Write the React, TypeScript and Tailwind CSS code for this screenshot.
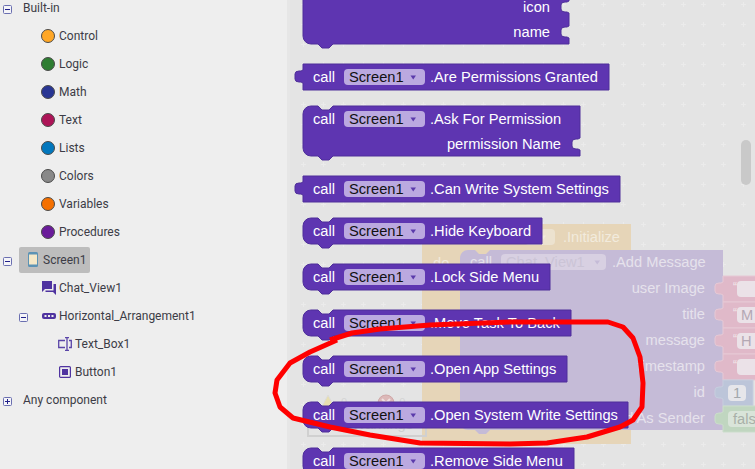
import React from "react";

type Kind = "stmt" | "value" | "topOpen";

function blockPath(kind: Kind, w: number, h: number, sockets: number[] = []) {
  let d = "";
  if (kind === "stmt") d = "M0,8 A8,8 0 0 1 8,0 H15 l4,4 h7 l4,-4 H" + w;
  else if (kind === "topOpen") d = "M0,-20 H" + w;
  else d = "M0,0 H" + w;
  for (const s of sockets) {
    d += ` V${s} l-2,1 h-2 q-4,0 -4,3 v4 q0,3 4,3 h2 l2,1`;
  }
  d += ` V${h}`;
  if (kind === "value") {
    d += ` H0 V19 l-2,-1 h-2 q-4,0 -4,-3 v-5 q0,-3 4,-3 h2 l2,-1 Z`;
  } else {
    d += ` H30 l-4,4 h-7 l-4,-4 H8 A8,8 0 0 1 0,${h - 8} Z`;
  }
  return d;
}

function Arrow({ color = "#5b3bab" }: { color?: string }) {
  return (
    <svg width="7" height="5" viewBox="0 0 7 5"><path d="M0.5,0.5 H6 L3.2,4.5 Z" fill={color} /></svg>
  );
}

function Field() {
  return (
    <span className="flex items-center justify-between h-[16px] w-[81px] rounded-[4px] bg-[#bba9e0] pl-[5px] pr-[8px] text-[#111111]">
      <span>Screen1</span>
      <Arrow />
    </span>
  );
}

function BlockShape({ kind, w, h, sockets }: { kind: Kind; w: number; h: number; sockets?: number[] }) {
  return (
    <svg className="absolute inset-0 overflow-visible" width={w} height={h}>
      <path d={blockPath(kind, w, h, sockets)} fill="#5e35b1" stroke="#4f2f9a" strokeWidth="1" />
    </svg>
  );
}

function CallRow({ name }: { name: string }) {
  return (
    <div className="relative flex items-center h-[26px] pl-[10px] gap-[9px]">
      <span>call</span>
      <Field />
      <span className="-ml-[4px] whitespace-nowrap">{name}</span>
    </div>
  );
}

function Block({ w, kind, name }: { w: number; kind: Kind; name: string }) {
  return (
    <div className={kind === "value" ? "relative h-[26px] shrink-0 mb-[16px]" : "relative h-[26px] shrink-0 mb-[20px]"} style={{ width: w }}>
      <BlockShape kind={kind} w={w} h={26} />
      <CallRow name={name} />
    </div>
  );
}

function Circle({ color }: { color: string }) {
  return <span className="w-[14px] h-[14px] rounded-full border border-[#4a4a4a] shrink-0" style={{ background: color }} />;
}

function Toggle({ plus = false }: { plus?: boolean }) {
  return (
    <svg width="9" height="9" viewBox="0 0 9 9" className="shrink-0 block">
      <rect x="0.5" y="0.5" width="8" height="8" rx="1" fill="#f4f4f8" stroke="#6a6fb0" />
      <path d={plus ? "M2,4.5 H7 M4.5,2 V7" : "M2,4.5 H7"} stroke="#20208a" />
    </svg>
  );
}

const categories: [string, string][] = [
  ["Control", "#ffa726"],
  ["Logic", "#2e7d32"],
  ["Math", "#283593"],
  ["Text", "#ad1457"],
  ["Lists", "#0277bd"],
  ["Colors", "#888888"],
  ["Variables", "#f57000"],
  ["Procedures", "#6a1b9a"],
];

const purple = "#4f33a0";

function PhoneIcon() {
  return (
    <svg width="10" height="15" viewBox="0 0 10 15">
      <rect width="10" height="15" rx="1.5" fill="#5c93b5" />
      <rect x="1" y="2.5" width="8" height="10" fill="#f5e8c8" />
    </svg>
  );
}

function ChatIcon() {
  return (
    <svg width="14" height="14" viewBox="0 0 14 14" fill={purple}>
      <path d="M0,0 H10 V8 H3 L0,11 Z" />
      <path d="M11.5,3 H14 V14 L11,11 H3.5 V9.5 H11.5 Z" />
    </svg>
  );
}

function HArrangeIcon() {
  return (
    <svg width="14" height="6" viewBox="0 0 14 6">
      <rect width="14" height="6" rx="2" fill={purple} />
      <rect x="2.5" y="2" width="2" height="2" fill="#eeeeee" />
      <rect x="6" y="2" width="2" height="2" fill="#eeeeee" />
      <rect x="9.5" y="2" width="2" height="2" fill="#eeeeee" />
    </svg>
  );
}

function TextBoxIcon() {
  return (
    <svg width="14" height="14" viewBox="0 0 14 14" fill="none" stroke="#5a45a8" strokeWidth="1.3">
      <path d="M7,3.5 H0.7 V10.5 H7" />
      <path d="M11,3.5 H13.3 V10.5 H11" />
      <path d="M7,0.7 H11 M9,0.7 V13.3 M7,13.3 H11" />
    </svg>
  );
}

function ButtonIcon() {
  return (
    <svg width="12" height="12" viewBox="0 0 12 12">
      <rect x="0.6" y="0.6" width="10.8" height="10.8" rx="1" fill="#eeeeee" stroke={purple} strokeWidth="1.2" />
      <rect x="3" y="3" width="6" height="6" fill={purple} />
    </svg>
  );
}

function Sidebar() {
  return (
    <aside className="w-[287px] h-[475px] shrink-0 bg-[#eeeeee] text-[12px] text-[#3c3c46] font-['Roboto',sans-serif] -mt-[6px]">
      <div className="relative flex items-center h-[28px] pl-[23px]">
        <span className="absolute left-[3px] top-[11px]"><Toggle /></span>
        Built-in
      </div>
      {categories.map(([n, c]) => (
        <div key={n} className="flex items-center h-[28px] pl-[41px] gap-[4px]">
          <Circle color={c} />
          <span>{n}</span>
        </div>
      ))}
      <div className="relative flex items-center h-[28px] pl-[19px]">
        <span className="absolute left-[3px] top-[11px]"><Toggle /></span>
        <div className="flex items-center h-[26px] w-[71px] -mt-[1px] bg-[#bdbdbd] rounded-[2px] pl-[9px] gap-[5px]">
          <PhoneIcon />
          <span>Screen1</span>
        </div>
      </div>
      <div className="flex items-center h-[28px] pl-[42px] gap-[3px]">
        <ChatIcon />
        <span>Chat_View1</span>
      </div>
      <div className="relative flex items-center h-[28px] pl-[42px] gap-[3px]">
        <span className="absolute left-[19px] top-[11px]"><Toggle /></span>
        <HArrangeIcon />
        <span>Horizontal_Arrangement1</span>
      </div>
      <div className="flex items-center h-[28px] pl-[58px] gap-[3px]">
        <TextBoxIcon />
        <span>Text_Box1</span>
      </div>
      <div className="flex items-center h-[28px] pl-[59px] gap-[4px]">
        <ButtonIcon />
        <span>Button1</span>
      </div>
      <div className="relative flex items-center h-[28px] pl-[23px]">
        <span className="absolute left-[3px] top-[11px]"><Toggle plus /></span>
        Any component
      </div>
    </aside>
  );
}

function GridCrosses() {
  return (
    <svg className="absolute inset-0" width="465" height="469">
      <defs>
        <pattern id="crosses" x="3" y="-6" width="20" height="20" patternUnits="userSpaceOnUse">
          <path d="M8,10.5 H13 M10.5,8 V13" stroke="#ebebeb" strokeWidth="1" />
        </pattern>
      </defs>
      <rect width="465" height="469" fill="url(#crosses)" />
    </svg>
  );
}

function Value({ color, edge, field, quoted = true, w = 40, fieldClass }: { color: string; edge: string; field: string; quoted?: boolean; w?: number; fieldClass: string }) {
  return (
    <div className="relative h-[26px] shrink-0 flex items-center" style={{ width: w }}>
      <svg className="absolute inset-0 overflow-visible" width={w} height="26">
        <path d={blockPath("value", w, 26)} fill={color} stroke={edge} strokeWidth="1" />
      </svg>
      {quoted ? (
        <span className="relative ml-[10px] mt-[-4px] w-[11px] text-[#f2e8ec] text-[12px]">“</span>
      ) : null}
      <span className={fieldClass}>{field}</span>
    </div>
  );
}

const stringField = "relative h-[16px] w-[30px] shrink-0 bg-[#ebe2e8] rounded-[4px] pl-[4px] flex items-center text-[#b4a8b4]";

function FadedBackground() {
  const labels = ["user Image", "title", "message", "timestamp", "id", "Add As Sender"];
  return (
    <div className="absolute inset-0 text-[#e6e2ec]">
      {/* orange event block */}
      <div className="absolute left-[132px] top-[224px] w-[209px] h-[220px] flex flex-col bg-[#e6d5b8] text-[#f2ebdd]">
        <div className="flex items-center justify-end h-[26px] pr-[11px] gap-[8px]">
          <span className="flex items-center justify-end w-[30px] h-[16px] rounded-[4px] bg-[#ece2cf] pr-[8px]"><Arrow color="#f2ebdd" /></span>
          <span>.Initialize</span>
        </div>
        <div className="flex items-center h-[26px] pl-[11px]">do</div>
      </div>
      {/* purple add message */}
      <div className="absolute left-[170px] top-[250px] w-[263px] h-[180px]">
        <svg className="absolute inset-0 overflow-visible" width="263" height="180">
          <path d={blockPath("stmt", 263, 180)} fill="#c5bbd7" />
        </svg>
        <div className="relative flex flex-col items-end pr-[18px]">
          <div className="flex items-center self-start h-[26px] -mt-[1px] pl-[10px] gap-[9px] whitespace-nowrap">
            <span>call</span>
            <span className="flex items-center justify-between w-[105px] h-[16px] rounded-[4px] bg-[#d8d0e2] px-[5px] text-[#cbc4d6]">
              Chat_View1
              <Arrow color="#c5bbd7" />
            </span>
            <span className="-ml-[3px]">.Add Message</span>
          </div>
          {labels.map((l) => (
            <div key={l} className="flex items-center h-[26px] whitespace-nowrap">{l}</div>
          ))}
        </div>
        <div className="absolute left-[263px] top-[26px] flex flex-col">
          <Value color="#e0b9c9" edge="#e6c9d5" field="" fieldClass={stringField} />
          <Value color="#e0b9c9" edge="#e6c9d5" field="M" fieldClass={stringField} />
          <Value color="#e0b9c9" edge="#e6c9d5" field="H" fieldClass={stringField} />
          <Value color="#e0b9c9" edge="#e6c9d5" field="" fieldClass={stringField} />
          <Value color="#bcc5d9" edge="#c6cede" field="1" quoted={false} w={30} fieldClass="relative ml-[5px] h-[16px] w-[18px] shrink-0 bg-[#e6e6ea] rounded-[4px] pl-[5px] flex items-center text-[#a3a8ad]" />
          <Value color="#c0d6c0" edge="#cbddcb" field="false" quoted={false} w={40} fieldClass="relative ml-[5px] h-[16px] w-[40px] shrink-0 bg-[#d9e4d9] rounded-[4px] pl-[5px] flex items-center text-[#a8b0a8]" />
        </div>
      </div>
      {/* warnings */}
      <div className="absolute left-[17px] top-[390px] w-[120px] flex flex-col text-[#cfcfcf]">
        <div className="flex items-center h-[25px] pl-[12px] text-[11px] text-[#d4d4d4]">
          <svg width="18" height="18" viewBox="0 0 18 18">
            <path d="M9,1 L17.5,17 H0.5 Z" fill="#e8dfb0" stroke="#dcdcdc" />
          </svg>
          <span className="ml-[4px]">0</span>
          <svg className="ml-[30px]" width="18" height="18" viewBox="0 0 18 18">
            <circle cx="9" cy="9" r="8" fill="#dcb8b8" stroke="#d0a8a8" />
            <path d="M5,5 L13,13 M13,5 L5,13" stroke="#efe0e0" strokeWidth="2" />
          </svg>
          <span className="ml-[4px]">0</span>
        </div>
        <div className="flex items-end justify-center h-[22px] border-2 border-[#d0d0d0] pr-[10px] whitespace-nowrap">Show Warnings</div>
      </div>
    </div>
  );
}

export default function App() {
  return (
    <div className="relative flex w-[755px] h-[469px] overflow-hidden bg-[#e4e4e4]">
      <Sidebar />
      <div className="w-[3px] h-full shrink-0 bg-[#e6e6e6]" />
      <main className="relative flex-1 h-full bg-[#e4e4e4] text-[14.67px] font-['Liberation_Sans',Arial,sans-serif]">
        <GridCrosses />
        <FadedBackground />
        <div className="absolute left-[451px] top-[140px] w-[10px] h-[45px] rounded-[5px] bg-[#c9c9c9]" />
        {/* flyout of blocks */}
        <div className="absolute left-[13px] top-0 flex flex-col items-start text-white">
          <div className="relative w-[266px] h-[44px] shrink-0 mb-[20px]">
            <BlockShape kind="topOpen" w={266} h={44} sockets={[1, 26]} />
            <div className="relative flex flex-col items-end pr-[19px] -mt-[6px]">
              <span className="h-[25px] flex items-center">icon</span>
              <span className="h-[25px] flex items-center">name</span>
            </div>
          </div>
          <Block w={306} kind="value" name=".Are Permissions Granted" />
          <div className="relative w-[277px] h-[50px] shrink-0 mb-[20px]">
            <BlockShape kind="stmt" w={277} h={50} sockets={[32]} />
            <CallRow name=".Ask For Permission" />
            <div className="relative flex items-center justify-end h-[24px] pr-[19px] whitespace-nowrap">permission Name</div>
          </div>
          <Block w={317} kind="value" name=".Can Write System Settings" />
          <Block w={239} kind="stmt" name=".Hide Keyboard" />
          <Block w={247} kind="stmt" name=".Lock Side Menu" />
          <Block w={268} kind="stmt" name=".Move Task To Back" />
          <Block w={264} kind="stmt" name=".Open App Settings" />
          <Block w={325} kind="stmt" name=".Open System Write Settings" />
          <Block w={271} kind="stmt" name=".Remove Side Menu" />
        </div>
      </main>
      <svg className="absolute inset-0 pointer-events-none" width="755" height="469">
        <path
          d="M330,340 L352,333 L380,329 L430,325 L510,322 L608,322 L623,327 L633,338 L640,357 L643,383 L642,407 L633,420 L620,427 L587,437 L547,443 L510,444 L420,443 L370,435 L330,427 L293,418 L280,407 L275,393 L277,380 L290,363 L310,352 L337,340"
          fill="none"
          stroke="#ff0000"
          strokeWidth="5"
          strokeLinejoin="round"
        />
      </svg>
    </div>
  );
}
